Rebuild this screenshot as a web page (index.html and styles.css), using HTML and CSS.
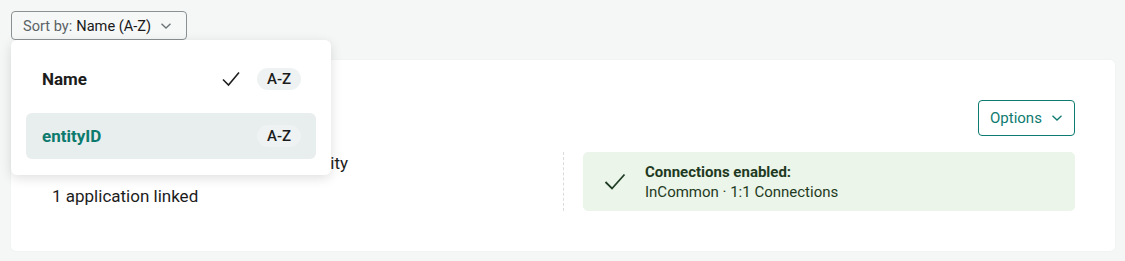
FILE: index.html
```html
<!DOCTYPE html>
<html>
<head>
<meta charset="utf-8">
<link rel="stylesheet" href="styles.css">
</head>
<body>
<div class="page">
  <div class="toolbar">
    <button class="sort-btn">
      <span class="sort-label">Sort by:</span>
      <span class="sort-value">Name (A-Z)</span>
      <svg class="chev" width="12" height="8" viewBox="0 0 12 8"><path d="M1.5 1.8 L6 6 L10.5 1.8" fill="none" stroke="#6b7274" stroke-width="1.3"/></svg>
    </button>
    <div class="menu">
      <div class="menu-item">
        <span class="item-name">Name</span>
        <svg class="item-check" width="20" height="18" viewBox="0 0 20 18"><path d="M2 9.5 L7.5 15 L18 2.5" fill="none" stroke="#1f1f1f" stroke-width="1.6"/></svg>
        <span class="badge">A-Z</span>
      </div>
      <div class="menu-item active">
        <span class="item-name">entityID</span>
        <span class="badge">A-Z</span>
      </div>
    </div>
  </div>

  <div class="card">
    <div class="card-head">
      <button class="options-btn">Options
        <svg width="12" height="8" viewBox="0 0 12 8"><path d="M1.5 1.8 L6 6 L10.5 1.8" fill="none" stroke="#0e7b70" stroke-width="1.3"/></svg>
      </button>
    </div>
    <div class="card-body">
      <div class="info">
        <div class="info-line">Service provider for a federated identity</div>
        <div class="info-line">1 application linked</div>
      </div>
      <div class="status">
        <svg class="status-check" width="22" height="18" viewBox="0 0 22 18"><path d="M1.5 9 L8 15.5 L20.5 1.5" fill="none" stroke="#1f3d24" stroke-width="1.8"/></svg>
        <div class="status-text">
          <div class="status-title">Connections enabled:</div>
          <div class="status-sub">InCommon · 1:1 Connections</div>
        </div>
      </div>
    </div>
  </div>
</div>
</body>
</html>
```

FILE: styles.css
```css
* { box-sizing: border-box; }
html, body { margin: 0; padding: 0; }
body {
  background: #f5f7f7;
  font-family: Roboto, "Liberation Sans", sans-serif;
  color: #1c1c1c;
  width: 1125px;
  height: 261px;
  overflow: hidden;
}
.page {
  padding: 11px 10px 10px 11px;
}
.toolbar {
  position: relative;
  height: 29px;
}
.sort-btn {
  display: inline-flex;
  align-items: center;
  height: 29px;
  width: 176px;
  padding: 0 0 0 11px;
  border: 1px solid #8b9193;
  border-radius: 4px;
  background: #f6f8f8;
  font-family: inherit;
  font-size: 14.6px;
  line-height: 18px;
}
.sort-label { color: #5b6366; margin-right: 4px; }
.sort-value { color: #1a1a1a; }
.chev { margin-left: 9px; }
.menu {
  position: absolute;
  top: 29px;
  left: 0;
  width: 320px;
  background: #fff;
  border-radius: 6px;
  box-shadow: 0 3px 12px rgba(0, 0, 0, 0.13);
  padding: 16px 15px;
  display: flex;
  flex-direction: column;
  gap: 11px;
  z-index: 10;
}
.menu-item {
  height: 46px;
  display: flex;
  align-items: center;
  padding: 0 15px 0 16px;
  border-radius: 6px;
}
.menu-item.active { background: #e8eded; }
.item-name {
  flex: 1;
  font-size: 17px;
  font-weight: 700;
  color: #1c1c1c;
}
.active .item-name { color: #0d7a6e; }
.item-check { margin-right: 16px; }
.badge {
  width: 44px;
  height: 22px;
  border-radius: 11px;
  background: #eef2f2;
  font-size: 15px;
  font-weight: 500;
  color: #1c1c1c;
  display: flex;
  align-items: center;
  justify-content: center;
}
.card {
  margin-top: 20px;
  width: 1104px;
  height: 191px;
  background: #fff;
  border-radius: 5px;
  padding: 40px 40px 40px 41px;
  box-shadow: 0 0 2px rgba(0, 0, 0, 0.05);
}
.card-head {
  display: flex;
  align-items: center;
  justify-content: flex-end;
  height: 36px;
}
.options-btn {
  display: inline-flex;
  align-items: center;
  gap: 9px;
  height: 36px;
  width: 97px;
  padding: 0 0 0 11px;
  border: 1px solid #0e7b70;
  border-radius: 4px;
  background: #fff;
  color: #0e7b70;
  font-family: inherit;
  font-size: 15px;
}
.card-body {
  margin-top: 16px;
  display: flex;
  height: 59px;
}
.info {
  flex: 1;
  display: flex;
  flex-direction: column;
  gap: 11px;
  border-right: 1px dashed #dcdcdc;
  margin-right: 19px;
}
.info-line {
  font-size: 17px;
  line-height: 22px;
  color: #1c1c1c;
}
.status {
  width: 492px;
  background: #ebf5ea;
  border-radius: 5px;
  display: flex;
  align-items: center;
  padding: 0 0 0 21px;
}
.status-check { margin-right: 19px; }
.status-text { font-size: 15px; line-height: 20px; color: #1f3a22; }
.status-title { font-weight: 700; }
```
